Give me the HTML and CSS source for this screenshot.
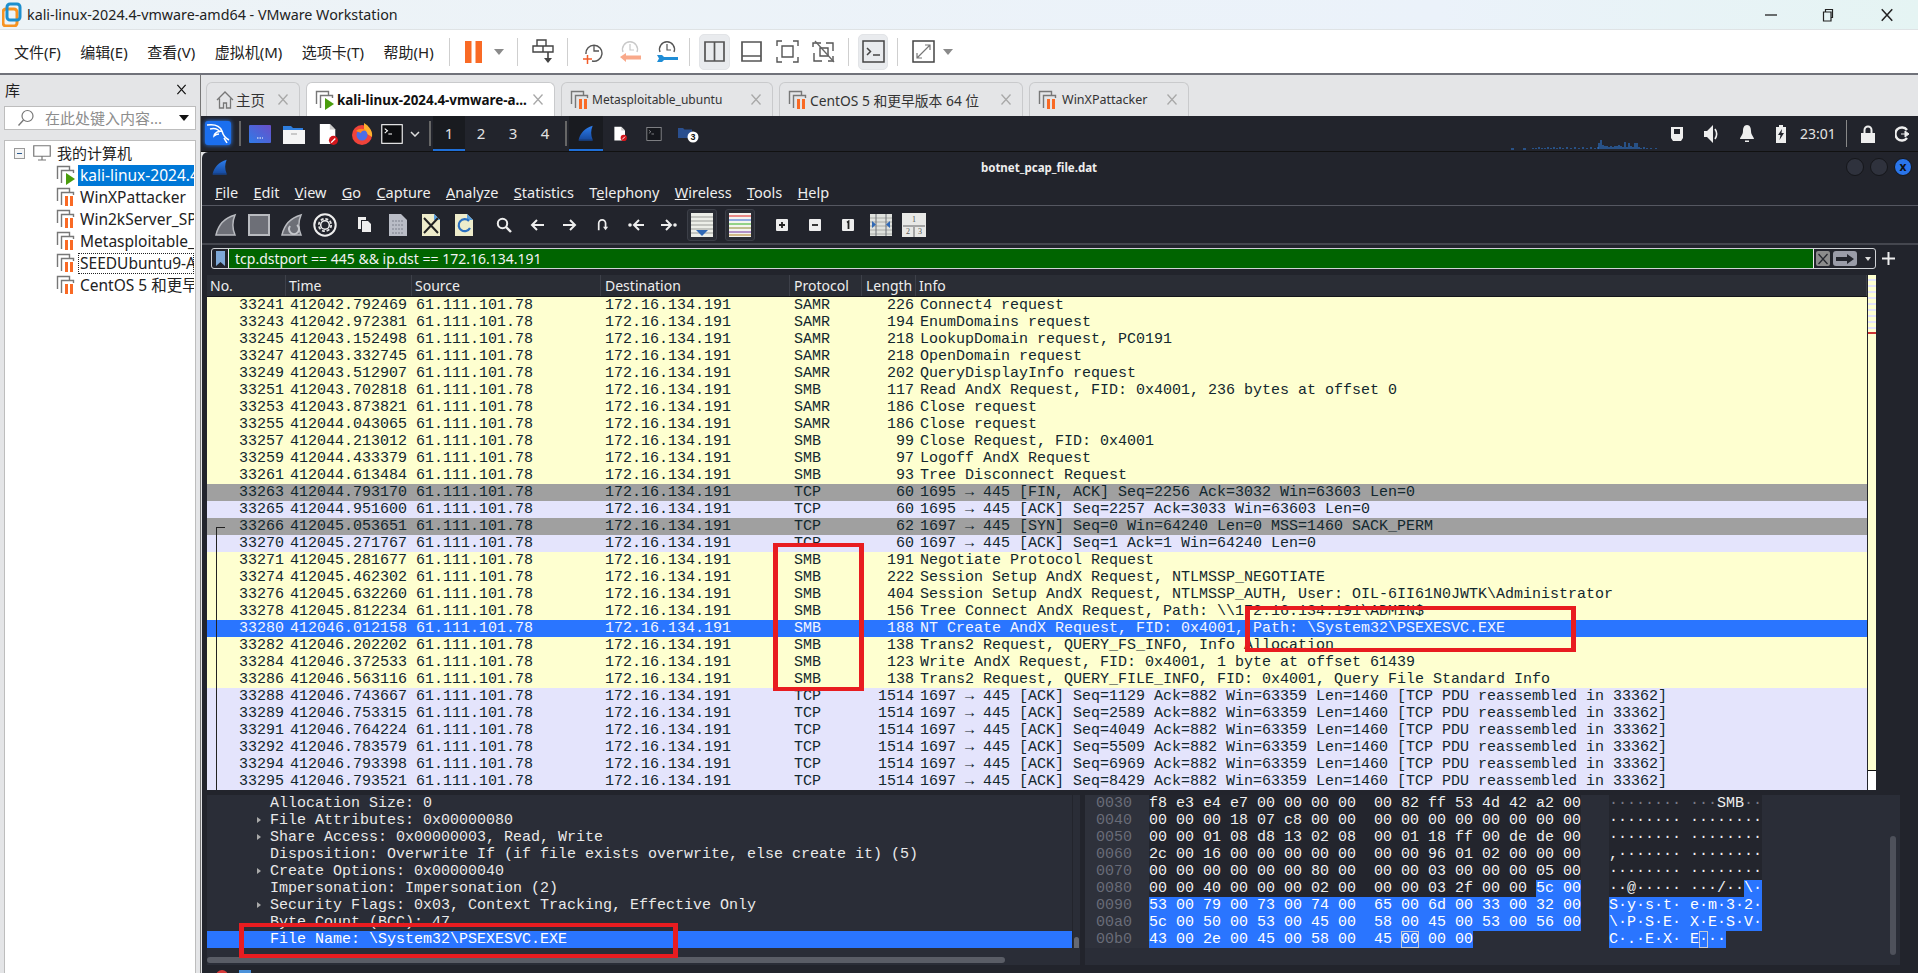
FILE: index.html
```html
<!DOCTYPE html>
<html lang="zh">
<head>
<meta charset="utf-8">
<title>kali-linux-2024.4-vmware-amd64 - VMware Workstation</title>
<link rel="stylesheet" href="styles.css">
</head>
<body>
<svg class="sprite" aria-hidden="true">
  <defs>
    <linearGradient id="finblue" x1="0" y1="0" x2="0" y2="1"><stop offset="0" stop-color="#2d7ff0"/><stop offset="1" stop-color="#164a9e"/></linearGradient>
    <linearGradient id="purple" x1="1" y1="0" x2="0" y2="1"><stop offset="0" stop-color="#6a4fc8"/><stop offset="1" stop-color="#2f7be8"/></linearGradient>
  </defs>
  <symbol id="vm-off" viewBox="0 0 20 20"><path d="M1.5 14V1.5h12V5M5.5 18V5.5h12V8" fill="none" stroke="#777" stroke-width="1.4"/><path d="M9 9h3v10H9zM14 9h3v10h-3z" fill="#f96a25"/></symbol>
  <symbol id="vm-on" viewBox="0 0 20 20"><path d="M1.5 14V1.5h12V5M5.5 18V5.5h12V8" fill="none" stroke="#777" stroke-width="1.4"/><path d="M10 8l9 6-9 6z" fill="#4a9d0c"/></symbol>
  <symbol id="x" viewBox="0 0 12 12"><path d="M1.5 1l9 10M10.5 1l-9 10" fill="none" stroke="currentColor" stroke-width="1.3"/></symbol>
  <symbol id="fin" viewBox="0 0 24 24"><path d="M1 22C3 13 10 4 22 1c-3 7-3 14 0 21z" fill="url(#finblue)"/><path d="M1 22h21v1.500H1z" fill="#164a9e"/></symbol>
  <symbol id="fin-gray" viewBox="0 0 24 24"><path d="M2 22C4 13 10 5 21 2c-3 7-3 13 0 20z" fill="#6d6f77" stroke="#b9bbc0" stroke-width="1.5"/></symbol>
  <symbol id="doc" viewBox="0 0 22 24"><path d="M2 1h11l6 6v16H2z" fill="#fff"/><path d="M13 1l6 6h-6z" fill="#ccc"/><circle cx="17" cy="19" r="5" fill="#d3161c"/><path d="M14.500 21.500l4.500-4.500" stroke="#fff" stroke-width="1.500"/></symbol>
  <symbol id="term" viewBox="0 0 24 22"><rect x=".75" y=".75" width="22.500" height="20.500" fill="#0c0d10" stroke="#fff" stroke-width="1.200"/><path d="M4 5l3 2.500L4 10M8 11h4" fill="none" stroke="#fff" stroke-width="1.200"/></symbol>
</svg>

<header class="titlebar">
  <svg class="app-logo" width="20" height="25" viewBox="0 0 20 25"><rect x="1" y="7" width="14" height="17" rx="3" fill="none" stroke="#f79321" stroke-width="3"/><rect x="5" y="2" width="13" height="16" rx="3" fill="none" stroke="#1d8fce" stroke-width="3"/></svg>
  <span class="title-text">kali-linux-2024.4-vmware-amd64 - VMware Workstation</span>
  <div class="win-btns">
    <svg width="12" height="12" viewBox="0 0 12 12"><path d="M0 6h12" stroke="#222" stroke-width="1.300"/></svg>
    <svg width="12" height="14" viewBox="0 0 12 14"><path d="M1.500 4h7.500v9H1.500zM3.500 4V1.500h7v8H9" fill="none" stroke="#222" stroke-width="1.200"/></svg>
    <svg class="win-x" width="14" height="14"><use href="#x"/></svg>
  </div>
</header>

<nav class="menubar">
  <div class="menus"><span>文件(F)</span><span>编辑(E)</span><span>查看(V)</span><span>虚拟机(M)</span><span>选项卡(T)</span><span>帮助(H)</span></div>
  <i class="sep ml13"></i>
  <div class="vbtn w36 ml6"><svg width="18" height="22" viewBox="0 0 18 22"><path d="M0 0h6.500v22H0zM10.500 0H17v22h-6.500z" fill="#f96a25"/></svg></div>
  <div class="drop"></div>
  <i class="sep ml11"></i>
  <div class="vbtn w36 ml7"><svg width="22" height="26" viewBox="0 0 22 26"><path d="M5 1h9v6H5zM1 7h10v6H1zM11 7h10v6H11z" fill="none" stroke="#444" stroke-width="1.400"/><path d="M16 13v7" stroke="#444" stroke-width="1.600"/><path d="M12 19h8l-4 5z" fill="#444"/></svg></div>
  <i class="sep ml6"></i>
  <div class="vbtn w37 ml6"><svg width="20" height="24" viewBox="0 0 20 24"><path d="M3 14a8 8 0 1 1 6 7" fill="none" stroke="#555" stroke-width="1.400"/><path d="M11 5v6h5" fill="none" stroke="#555" stroke-width="1.300"/><path d="M0 19h9M4.500 15v9" stroke="#f25c2a" stroke-width="1.500"/></svg></div>
  <div class="vbtn w37"><svg width="22" height="24" viewBox="0 0 22 24"><path d="M4 12a7.500 7.500 0 1 1 14 0" fill="none" stroke="#c9c9c9" stroke-width="1.400"/><path d="M11 4v6h4" fill="none" stroke="#c9c9c9" stroke-width="1.200"/><path d="M1 17l6-4v2.500h15v4H7V22z" fill="#f9a98a"/></svg></div>
  <div class="vbtn w37"><svg width="22" height="24" viewBox="0 0 22 24"><path d="M4 12a7.500 7.500 0 1 1 14 0" fill="none" stroke="#555" stroke-width="1.400"/><path d="M11 4v6h4" fill="none" stroke="#555" stroke-width="1.200"/><path d="M1 15h5l2 2h14v3H8l-2 2H1l2-3.500z" fill="#1f8dd6"/></svg></div>
  <i class="sep ml4"></i>
  <div class="vbtn w31 ml9 active"><svg width="21" height="21" viewBox="0 0 21 21"><path d="M1 1h19v19H1zM10.500 1v19" fill="none" stroke="#555" stroke-width="1.700"/></svg></div>
  <div class="vbtn w36 ml3"><svg width="21" height="21" viewBox="0 0 21 21"><path d="M1 1h19v19H1zM1 15h19" fill="none" stroke="#555" stroke-width="1.700"/></svg></div>
  <div class="vbtn w36"><svg width="23" height="23" viewBox="0 0 23 23"><path d="M1 6V1h5M17 1h5v5M22 17v5h-5M6 22H1v-5" fill="none" stroke="#555" stroke-width="1.400"/><path d="M6 6h11v11H6z" fill="none" stroke="#555" stroke-width="1.400"/></svg></div>
  <div class="vbtn w36"><svg width="23" height="23" viewBox="0 0 23 23"><path d="M1 7V3h8M14 3h7v8M21 16v5h-5M10 21H2v-8M8 8h8v8H8z" fill="none" stroke="#555" stroke-width="1.400"/><path d="M3 1l19 21" stroke="#666" stroke-width="1.300"/></svg></div>
  <i class="sep ml7"></i>
  <div class="vbtn w30 ml9 active"><svg width="23" height="23" viewBox="0 0 23 23"><path d="M1 1h21v21H1z" fill="none" stroke="#444" stroke-width="1.500"/><path d="M5 8l3.500 3.500L5 15" fill="none" stroke="#444" stroke-width="1.500"/><path d="M11 15h7" stroke="#444" stroke-width="1.500"/></svg></div>
  <i class="sep ml9"></i>
  <div class="vbtn w36 ml7"><svg width="23" height="23" viewBox="0 0 23 23"><path d="M1 1h21v21H1z" fill="none" stroke="#444" stroke-width="1.500"/><path d="M5 18L18 5M13 5h5v5M5 13v5h5" fill="none" stroke="#777" stroke-width="1.200"/></svg></div>
  <div class="drop"></div>
</nav>

<main class="main">
  <aside class="library">
    <div class="lib-head"><span>库</span><svg class="lib-x" width="11" height="11"><use href="#x"/></svg></div>
    <div class="lib-search">
      <svg width="18" height="18" viewBox="0 0 18 18"><circle cx="10.500" cy="7" r="5.500" fill="none" stroke="#777" stroke-width="1.200"/><path d="M6.500 11L1.500 16.500" stroke="#777" stroke-width="1.400"/></svg>
      <span class="ph">在此处键入内容...</span>
      <i class="lib-drop"></i>
    </div>
    <div class="tree">
      <div class="tree-root">
        <i class="minus"></i>
        <svg width="18" height="16" viewBox="0 0 18 16"><path d="M.75.750h16.500v10.500H.75zM9 11.500V15M5 15h8" fill="none" stroke="#777" stroke-width="1.200"/></svg>
        <span>我的计算机</span>
      </div>
      <div class="tree-row"><svg width="20" height="20"><use href="#vm-on"/></svg><span class="tree-label selected">kali-linux-2024.4</span></div>
      <div class="tree-row"><svg width="20" height="20"><use href="#vm-off"/></svg><span class="tree-label">WinXPattacker</span></div>
      <div class="tree-row"><svg width="20" height="20"><use href="#vm-off"/></svg><span class="tree-label">Win2kServer_SP</span></div>
      <div class="tree-row"><svg width="20" height="20"><use href="#vm-off"/></svg><span class="tree-label">Metasploitable_</span></div>
      <div class="tree-row"><svg width="20" height="20"><use href="#vm-off"/></svg><span class="tree-label focused">SEEDUbuntu9-A</span></div>
      <div class="tree-row"><svg width="20" height="20"><use href="#vm-off"/></svg><span class="tree-label">CentOS 5 和更早</span></div>
    </div>
  </aside>

  <section class="vm">
    <div class="tabs">
      <div class="tab t-home"><svg width="20" height="20" viewBox="0 0 20 20"><path d="M2 10l8-8 8 8M4.500 8.500V18h4v-5h3v5h4V8.500" fill="none" stroke="#777" stroke-width="1.300"/></svg><span>主页</span><svg class="tab-x" width="12" height="13"><use href="#x"/></svg></div>
      <div class="tab t-kali active"><svg width="20" height="20"><use href="#vm-on"/></svg><span>kali-linux-2024.4-vmware-a...</span><svg class="tab-x" width="12" height="13"><use href="#x"/></svg></div>
      <div class="tab t-meta"><svg width="20" height="20"><use href="#vm-off"/></svg><span>Metasploitable_ubuntu</span><svg class="tab-x" width="12" height="13"><use href="#x"/></svg></div>
      <div class="tab t-cent"><svg width="20" height="20"><use href="#vm-off"/></svg><span>CentOS 5 和更早版本 64 位</span><svg class="tab-x" width="12" height="13"><use href="#x"/></svg></div>
      <div class="tab t-winx"><svg width="20" height="20"><use href="#vm-off"/></svg><span>WinXPattacker</span><svg class="tab-x" width="12" height="13"><use href="#x"/></svg></div>
    </div>

    <div class="panel">
      <div class="kali-logo"><svg width="26" height="24" viewBox="0 0 26 24"><path d="M2 4c7-1 13 1 15 6 1 4 3 7 7 9M5 8c4-1 8 0 10 3M17 10c-4 0-8 2-8 5 1-1 3-2 5-2M19 17c1 2 2 3 3 5" fill="none" stroke="#fff" stroke-width="1.500"/></svg></div>
      <i class="psep ml8"></i>
      <div class="cell c34 ml2"><svg width="22" height="18"><rect width="22" height="18" rx="1" fill="url(#purple)"/><path d="M8 13h6" stroke="#fff" stroke-dasharray="1.500 1"/></svg></div>
      <div class="cell c34"><svg width="22" height="20" viewBox="0 0 22 20"><path d="M0 2h8l2 2h10v3H0z" fill="#2f7fe0"/><path d="M0 6h22v14H0z" fill="#f4f4f4"/><path d="M8 10h6" stroke="#bbb" stroke-width="1.500"/></svg></div>
      <div class="cell c34"><svg width="20" height="22"><use href="#doc"/></svg></div>
      <div class="cell c34"><svg width="22" height="22" viewBox="0 0 22 22"><circle cx="11" cy="12" r="10" fill="#f0433a"/><path d="M13 0c5 3 9 8 8 14L13 9z" fill="#ffb02e"/><circle cx="11" cy="12" r="5.500" fill="#4a6ee8"/><path d="M5 8c3-3 8-3 11 0-3-1-6 0-6 2z" fill="#ff8a1e"/></svg></div>
      <div class="cell c26"><svg width="22" height="20"><use href="#term"/></svg></div>
      <div class="cell c20"><svg width="10" height="6" viewBox="0 0 10 6"><path d="M1 1l4 4 4-4" fill="none" stroke="#ddd" stroke-width="1.500"/></svg></div>
      <i class="psep ml4"></i>
      <div class="ws ml2 on">1</div><div class="ws">2</div><div class="ws">3</div><div class="ws">4</div>
      <i class="psep ml4"></i>
      <div class="cell c34 ml2 on"><svg width="16" height="16"><use href="#fin"/></svg></div>
      <div class="cell c34"><svg width="14" height="15"><use href="#doc"/></svg></div>
      <div class="cell c34"><svg class="dim" width="16" height="14"><use href="#term"/></svg></div>
      <div class="cell c34"><svg width="22" height="20" viewBox="0 0 22 20"><path d="M1 4h5l1.500 1.500H15V14H1z" fill="#2a4f8f"/><circle cx="16" cy="13" r="5.500" fill="#fff"/><text x="16" y="16" text-anchor="middle" font-family="Liberation Sans, sans-serif" font-size="9" font-weight="700" fill="#111">3</text></svg></div>
      <svg class="graph" width="148" height="12" viewBox="0 0 148 12"><path d="M0 11h3M12 11h3M22 11v-1M25 11v-1M28 11v-2M31 11v-1M34 11v-1M37 11v-2M40 11v-1M43 11v-2M46 11v-1M49 11v-2M52 11v-1M56 11v-2M60 11v-1M64 11v-2M68 11v-1M72 11v-2M76 11v-1M80 11v-2M84 11v-1M87 11v-2M88 11v-6M90 11v-9M92 11v-4M94 11v-3M96 11v-3M98 11v-2M100 11v-3M102 11v-2M104 11v-3M106 11v-3M108 11v-4M110 11v-3M112 11v-2M114 11v-7M116 11v-2M118 11v-6M120 11v-3M122 11v-2M124 11v-6M126 11v-6M128 11v-2M130 11v-1M133 11v-2M136 11v-1M140 11v-1M145 11v-1" stroke="#2f7fe0" fill="none"/></svg>
      <div class="cell c35"><svg width="14" height="16" viewBox="0 0 14 16"><path d="M1 1h12v11l-2 3H3l-2-3z" fill="#eee"/><path d="M4 3h6v5H4z" fill="#22242c"/></svg></div>
      <div class="cell c35"><svg width="16" height="18" viewBox="0 0 16 18"><path d="M0 6h3l6-6v18l-6-6H0z" fill="#eee"/><path d="M11 4c2 3 2 7 0 10" fill="none" stroke="#eee" stroke-width="1.600"/></svg></div>
      <div class="cell c35"><svg width="14" height="18" viewBox="0 0 14 18"><path d="M7 0c3 0 4 3 4 6 0 4 3 6 3 8H0c0-2 3-4 3-8 0-3 1-6 4-6z" fill="#eee"/><path d="M5 15.500h4V17H5z" fill="#eee"/></svg></div>
      <div class="cell c34"><svg width="10" height="18" viewBox="0 0 10 18"><path d="M3 0h4v2h3v16H0V2h3z" fill="#eee"/><path d="M6 4L2 10h2.500L3.500 15 8 8H5.500z" fill="#22242c"/></svg></div>
      <div class="clock">23:01</div>
      <i class="psep ml8 thin"></i>
      <div class="cell c32 ml5"><svg width="14" height="18" viewBox="0 0 14 18"><path d="M3.500 8V5a3.500 3.500 0 0 1 7 0v3" fill="none" stroke="#eee" stroke-width="2"/><path d="M0 8h14v10H0z" fill="#eee"/></svg></div>
      <div class="cell c32 ml2"><svg width="15" height="16" viewBox="0 0 15 16"><path d="M12 4a6.500 6.500 0 1 0 0 8" fill="none" stroke="#eee" stroke-width="2.400"/><path d="M6 8h6M10 5l4 3-4 3z" fill="#eee" stroke="#eee"/></svg></div>
    </div>

    <div class="window">
      <div class="ws-title">
        <svg class="ws-logo" width="16" height="16"><use href="#fin"/></svg>
        <span class="ws-name">botnet_pcap_file.dat</span>
        <div class="ws-btns"><i></i><i></i><i class="close">x</i></div>
      </div>
      <div class="ws-menu"><span><u>F</u>ile</span><span><u>E</u>dit</span><span><u>V</u>iew</span><span><u>G</u>o</span><span><u>C</u>apture</span><span><u>A</u>nalyze</span><span><u>S</u>tatistics</span><span>T<u>e</u>lephony</span><span><u>W</u>ireless</span><span><u>T</u>ools</span><span><u>H</u>elp</span></div>
      <div class="ws-tools">
        <div class="tool"><svg width="24" height="24"><use href="#fin-gray"/></svg></div>
        <div class="tool"><svg width="22" height="22" viewBox="0 0 22 22"><rect x="1" y="1" width="20" height="20" fill="#6d6f77" stroke="#b9bbc0" stroke-width="2"/></svg></div>
        <div class="tool"><svg width="24" height="24" viewBox="0 0 24 24"><path d="M2 22C4 13 10 5 21 2c-3 7-3 13 0 20z" fill="#6d6f77" stroke="#b9bbc0" stroke-width="1.500"/><path d="M10 13a5 5 0 1 0 7-1" fill="none" stroke="#c5c7cc" stroke-width="2"/></svg></div>
        <div class="tool"><svg width="24" height="24" viewBox="0 0 24 24"><circle cx="12" cy="12" r="10.700" fill="none" stroke="#eee" stroke-width="2"/><circle cx="12" cy="12" r="6.200" fill="none" stroke="#e4e4e4" stroke-width="1.800" stroke-dasharray="3 1.800"/><circle cx="12" cy="12" r="4.300" fill="none" stroke="#eee" stroke-width="1.500"/></svg></div>
        <div class="tool ml7"><svg width="15" height="15" viewBox="0 0 15 15"><path d="M1 0h8v3H4v9H1z" fill="#eee"/><path d="M5 4h6l3 3v8H5z" fill="#eee"/></svg></div>
        <div class="tool"><svg width="20" height="24" viewBox="0 0 20 24"><path d="M1 1h12l6 6v16H1z" fill="#b9bcc6"/><path d="M4 8h12M4 12h12M4 16h12M4 20h12" stroke="#7d808c" stroke-dasharray="2 1"/></svg></div>
        <div class="tool"><svg width="20" height="24" viewBox="0 0 20 24"><path d="M1 1h12l6 6v16H1z" fill="#eeeccb"/><path d="M13 1l6 6h-6z" fill="#5aa0e0"/><path d="M3 5l14 15M17 5L3 20" stroke="#222" stroke-width="2"/></svg></div>
        <div class="tool"><svg width="20" height="24" viewBox="0 0 20 24"><path d="M1 1h12l6 6v16H1z" fill="#eeeccb"/><path d="M13 1l6 6h-6z" fill="#5aa0e0"/><path d="M15 8a6 6 0 1 0 1 7" fill="none" stroke="#2a6fc0" stroke-width="2.200"/></svg></div>
        <div class="tool ml7"><svg width="16" height="16" viewBox="0 0 16 16"><circle cx="6.500" cy="6.500" r="4.700" fill="none" stroke="#eee" stroke-width="2"/><path d="M10 10l5 5" stroke="#eee" stroke-width="2.400"/></svg></div>
        <div class="tool"><svg width="14" height="12" viewBox="0 0 14 12"><path d="M14 6H2M7 1L2 6l5 5" fill="none" stroke="#eee" stroke-width="2"/></svg></div>
        <div class="tool"><svg width="14" height="12" viewBox="0 0 14 12"><path d="M0 6h12M7 1l5 5-5 5" fill="none" stroke="#eee" stroke-width="2"/></svg></div>
        <div class="tool"><svg width="12" height="14" viewBox="0 0 14 14"><path d="M2 13V5a4 4 0 0 1 8 0v5" fill="none" stroke="#eee" stroke-width="2"/><path d="M7 9l3 4 3-4z" fill="#eee"/></svg></div>
        <div class="tool"><svg width="16" height="12" viewBox="0 0 16 12"><circle cx="2" cy="6" r="1.800" fill="#eee"/><path d="M16 6H6M11 1L6 6l5 5" fill="none" stroke="#eee" stroke-width="2"/></svg></div>
        <div class="tool"><svg width="16" height="12" viewBox="0 0 16 12"><circle cx="14" cy="6" r="1.800" fill="#eee"/><path d="M0 6h10M5 1l5 5-5 5" fill="none" stroke="#eee" stroke-width="2"/></svg></div>
        <div class="tool frame ml2"><svg width="22" height="26" viewBox="0 0 22 26"><path d="M0 1h22v24H0z" fill="#eceee8"/><path d="M0 5h22M0 9h22M0 13h22M0 17h22M0 21h22" stroke="#9a9c98"/><path d="M5 18h12l-6 6z" fill="#2f68b5"/></svg></div>
        <div class="tool frame ml5"><svg width="22" height="26" viewBox="0 0 22 26"><path d="M0 1h22v24H0z" fill="#f4f4f0"/><path d="M0 4h22" stroke="#e02020"/><path d="M0 8h22" stroke="#2a60d0"/><path d="M0 12h22" stroke="#30b020"/><path d="M0 16h22" stroke="#8a8a30"/><path d="M0 20h22" stroke="#7030a0"/><path d="M0 23h22" stroke="#b08020"/></svg></div>
        <div class="tool ml7"><svg width="12" height="12" viewBox="0 0 12 12"><rect width="12" height="12" rx="1" fill="#eee"/><path d="M3 6h6M6 3v6" stroke="#222" stroke-width="1.800"/></svg></div>
        <div class="tool"><svg width="12" height="12" viewBox="0 0 12 12"><rect width="12" height="12" rx="1" fill="#eee"/><path d="M3 6h6" stroke="#222" stroke-width="1.800"/></svg></div>
        <div class="tool"><svg width="12" height="12" viewBox="0 0 12 12"><rect width="12" height="12" rx="1" fill="#eee"/><path d="M5 3.500l1.500-1V10" fill="none" stroke="#222" stroke-width="1.800"/></svg></div>
        <div class="tool"><svg width="22" height="22" viewBox="0 0 22 22"><path d="M0 0h22v22H0z" fill="#dfe1dd"/><path d="M0 4h22M0 8h22M0 12h22M0 16h22M0 20h22" stroke="#a8aaa6"/><path d="M6 0v22M16 0v22" stroke="#6d7078"/><path d="M2 7l4 3.500L2 14zM20 7l-4 3.500 4 3.500z" fill="#2f68b5"/></svg></div>
        <div class="tool"><svg width="24" height="24" viewBox="0 0 24 24"><path d="M0 0h24v24H0z" fill="#e8e8e6"/><path d="M1 13h22M12 13v11" stroke="#a5a5a5" stroke-width="2"/><g font-family="Liberation Serif, serif" font-size="8" fill="#555" text-anchor="middle"><text x="12" y="9">1</text><text x="6" y="21">2</text><text x="18" y="21">3</text></g></svg></div>
      </div>
      <div class="filter-row">
        <div class="filter">
          <div class="bookmark"><svg width="9" height="15" viewBox="0 0 9 15"><path d="M0 0h9v15l-4.500-4L0 15z" fill="#7fa9d8"/></svg></div>
          <div class="filter-text">tcp.dstport == 445 &amp;&amp; ip.dst == 172.16.134.191</div>
          <div class="f-clear"><svg width="12" height="12"><use href="#x"/></svg></div>
          <div class="f-apply"><svg width="18" height="10" viewBox="0 0 18 10"><path d="M0 3h11V0l7 5-7 5V7H0z" fill="#22242c"/></svg></div>
          <i class="f-drop"></i>
        </div>
        <svg class="f-plus" width="13" height="13" viewBox="0 0 13 13"><path d="M6.500 0v13M0 6.500h13" stroke="#eee" stroke-width="2"/></svg>
      </div>

      <div class="list-wrap">
        <div class="list">
          <div class="pkt-head"><span class="no">No.</span><span class="time">Time</span><span class="src">Source</span><span class="dst">Destination</span><span class="pro">Protocol</span><span class="len">Length</span><span class="info">Info</span></div>
          <div class="pkts">
            <i class="bracket"></i>
            <div class="pkt y"><span class="no">33241</span><span class="time">412042.792469</span><span class="src">61.111.101.78</span><span class="dst">172.16.134.191</span><span class="pro">SAMR</span><span class="len">226</span><span class="info">Connect4 request</span></div>
            <div class="pkt y"><span class="no">33243</span><span class="time">412042.972381</span><span class="src">61.111.101.78</span><span class="dst">172.16.134.191</span><span class="pro">SAMR</span><span class="len">194</span><span class="info">EnumDomains request</span></div>
            <div class="pkt y"><span class="no">33245</span><span class="time">412043.152498</span><span class="src">61.111.101.78</span><span class="dst">172.16.134.191</span><span class="pro">SAMR</span><span class="len">218</span><span class="info">LookupDomain request, PC0191</span></div>
            <div class="pkt y"><span class="no">33247</span><span class="time">412043.332745</span><span class="src">61.111.101.78</span><span class="dst">172.16.134.191</span><span class="pro">SAMR</span><span class="len">218</span><span class="info">OpenDomain request</span></div>
            <div class="pkt y"><span class="no">33249</span><span class="time">412043.512907</span><span class="src">61.111.101.78</span><span class="dst">172.16.134.191</span><span class="pro">SAMR</span><span class="len">202</span><span class="info">QueryDisplayInfo request</span></div>
            <div class="pkt y"><span class="no">33251</span><span class="time">412043.702818</span><span class="src">61.111.101.78</span><span class="dst">172.16.134.191</span><span class="pro">SMB</span><span class="len">117</span><span class="info">Read AndX Request, FID: 0x4001, 236 bytes at offset 0</span></div>
            <div class="pkt y"><span class="no">33253</span><span class="time">412043.873821</span><span class="src">61.111.101.78</span><span class="dst">172.16.134.191</span><span class="pro">SAMR</span><span class="len">186</span><span class="info">Close request</span></div>
            <div class="pkt y"><span class="no">33255</span><span class="time">412044.043065</span><span class="src">61.111.101.78</span><span class="dst">172.16.134.191</span><span class="pro">SAMR</span><span class="len">186</span><span class="info">Close request</span></div>
            <div class="pkt y"><span class="no">33257</span><span class="time">412044.213012</span><span class="src">61.111.101.78</span><span class="dst">172.16.134.191</span><span class="pro">SMB</span><span class="len">99</span><span class="info">Close Request, FID: 0x4001</span></div>
            <div class="pkt y"><span class="no">33259</span><span class="time">412044.433379</span><span class="src">61.111.101.78</span><span class="dst">172.16.134.191</span><span class="pro">SMB</span><span class="len">97</span><span class="info">Logoff AndX Request</span></div>
            <div class="pkt y"><span class="no">33261</span><span class="time">412044.613484</span><span class="src">61.111.101.78</span><span class="dst">172.16.134.191</span><span class="pro">SMB</span><span class="len">93</span><span class="info">Tree Disconnect Request</span></div>
            <div class="pkt g"><span class="no">33263</span><span class="time">412044.793170</span><span class="src">61.111.101.78</span><span class="dst">172.16.134.191</span><span class="pro">TCP</span><span class="len">60</span><span class="info">1695 → 445 [FIN, ACK] Seq=2256 Ack=3032 Win=63603 Len=0</span></div>
            <div class="pkt l"><span class="no">33265</span><span class="time">412044.951600</span><span class="src">61.111.101.78</span><span class="dst">172.16.134.191</span><span class="pro">TCP</span><span class="len">60</span><span class="info">1695 → 445 [ACK] Seq=2257 Ack=3033 Win=63603 Len=0</span></div>
            <div class="pkt g"><span class="no">33266</span><span class="time">412045.053651</span><span class="src">61.111.101.78</span><span class="dst">172.16.134.191</span><span class="pro">TCP</span><span class="len">62</span><span class="info">1697 → 445 [SYN] Seq=0 Win=64240 Len=0 MSS=1460 SACK_PERM</span></div>
            <div class="pkt l"><span class="no">33270</span><span class="time">412045.271767</span><span class="src">61.111.101.78</span><span class="dst">172.16.134.191</span><span class="pro">TCP</span><span class="len">60</span><span class="info">1697 → 445 [ACK] Seq=1 Ack=1 Win=64240 Len=0</span></div>
            <div class="pkt y"><span class="no">33271</span><span class="time">412045.281677</span><span class="src">61.111.101.78</span><span class="dst">172.16.134.191</span><span class="pro">SMB</span><span class="len">191</span><span class="info">Negotiate Protocol Request</span></div>
            <div class="pkt y"><span class="no">33274</span><span class="time">412045.462302</span><span class="src">61.111.101.78</span><span class="dst">172.16.134.191</span><span class="pro">SMB</span><span class="len">222</span><span class="info">Session Setup AndX Request, NTLMSSP_NEGOTIATE</span></div>
            <div class="pkt y"><span class="no">33276</span><span class="time">412045.632260</span><span class="src">61.111.101.78</span><span class="dst">172.16.134.191</span><span class="pro">SMB</span><span class="len">404</span><span class="info">Session Setup AndX Request, NTLMSSP_AUTH, User: OIL-6II61N0JWTK\Administrator</span></div>
            <div class="pkt y"><span class="no">33278</span><span class="time">412045.812234</span><span class="src">61.111.101.78</span><span class="dst">172.16.134.191</span><span class="pro">SMB</span><span class="len">156</span><span class="info">Tree Connect AndX Request, Path: \\172.16.134.191\ADMIN$</span></div>
            <div class="pkt s"><span class="no">33280</span><span class="time">412046.012158</span><span class="src">61.111.101.78</span><span class="dst">172.16.134.191</span><span class="pro">SMB</span><span class="len">188</span><span class="info">NT Create AndX Request, FID: 0x4001, Path: \System32\PSEXESVC.EXE</span></div>
            <div class="pkt y"><span class="no">33282</span><span class="time">412046.202202</span><span class="src">61.111.101.78</span><span class="dst">172.16.134.191</span><span class="pro">SMB</span><span class="len">138</span><span class="info">Trans2 Request, QUERY_FS_INFO, Info Allocation</span></div>
            <div class="pkt y"><span class="no">33284</span><span class="time">412046.372533</span><span class="src">61.111.101.78</span><span class="dst">172.16.134.191</span><span class="pro">SMB</span><span class="len">123</span><span class="info">Write AndX Request, FID: 0x4001, 1 byte at offset 61439</span></div>
            <div class="pkt y"><span class="no">33286</span><span class="time">412046.563116</span><span class="src">61.111.101.78</span><span class="dst">172.16.134.191</span><span class="pro">SMB</span><span class="len">138</span><span class="info">Trans2 Request, QUERY_FILE_INFO, FID: 0x4001, Query File Standard Info</span></div>
            <div class="pkt l"><span class="no">33288</span><span class="time">412046.743667</span><span class="src">61.111.101.78</span><span class="dst">172.16.134.191</span><span class="pro">TCP</span><span class="len">1514</span><span class="info">1697 → 445 [ACK] Seq=1129 Ack=882 Win=63359 Len=1460 [TCP PDU reassembled in 33362]</span></div>
            <div class="pkt l"><span class="no">33289</span><span class="time">412046.753315</span><span class="src">61.111.101.78</span><span class="dst">172.16.134.191</span><span class="pro">TCP</span><span class="len">1514</span><span class="info">1697 → 445 [ACK] Seq=2589 Ack=882 Win=63359 Len=1460 [TCP PDU reassembled in 33362]</span></div>
            <div class="pkt l"><span class="no">33291</span><span class="time">412046.764224</span><span class="src">61.111.101.78</span><span class="dst">172.16.134.191</span><span class="pro">TCP</span><span class="len">1514</span><span class="info">1697 → 445 [ACK] Seq=4049 Ack=882 Win=63359 Len=1460 [TCP PDU reassembled in 33362]</span></div>
            <div class="pkt l"><span class="no">33292</span><span class="time">412046.783579</span><span class="src">61.111.101.78</span><span class="dst">172.16.134.191</span><span class="pro">TCP</span><span class="len">1514</span><span class="info">1697 → 445 [ACK] Seq=5509 Ack=882 Win=63359 Len=1460 [TCP PDU reassembled in 33362]</span></div>
            <div class="pkt l"><span class="no">33294</span><span class="time">412046.793398</span><span class="src">61.111.101.78</span><span class="dst">172.16.134.191</span><span class="pro">TCP</span><span class="len">1514</span><span class="info">1697 → 445 [ACK] Seq=6969 Ack=882 Win=63359 Len=1460 [TCP PDU reassembled in 33362]</span></div>
            <div class="pkt l"><span class="no">33295</span><span class="time">412046.793521</span><span class="src">61.111.101.78</span><span class="dst">172.16.134.191</span><span class="pro">TCP</span><span class="len">1514</span><span class="info">1697 → 445 [ACK] Seq=8429 Ack=882 Win=63359 Len=1460 [TCP PDU reassembled in 33362]</span></div>
          </div>
        </div>
        <div class="minimap"></div>
      </div>

      <div class="panes">
        <div class="details">
          <div class="d-body">
            <div class="d-rows">
              <div class="drow"><i class="tw"></i>Allocation Size: 0</div>
              <div class="drow"><i class="tw on"></i>File Attributes: 0x00000080</div>
              <div class="drow"><i class="tw on"></i>Share Access: 0x00000003, Read, Write</div>
              <div class="drow"><i class="tw"></i>Disposition: Overwrite If (if file exists overwrite, else create it) (5)</div>
              <div class="drow"><i class="tw on"></i>Create Options: 0x00000040</div>
              <div class="drow"><i class="tw"></i>Impersonation: Impersonation (2)</div>
              <div class="drow"><i class="tw on"></i>Security Flags: 0x03, Context Tracking, Effective Only</div>
              <div class="drow"><i class="tw"></i>Byte Count (BCC): 47</div>
              <div class="drow sel"><i class="tw"></i>File Name: \System32\PSEXESVC.EXE</div>
            </div>
            <div class="vbar"><b></b></div>
          </div>
          <div class="hbar"><b></b></div>
        </div>
        <div class="hex">
          <div class="hex-rows">
            <div class="hrow"><span class="off">0030</span><span class="bytes">f8 e3 e4 e7 00 00 00 00  00 82 ff 53 4d 42 a2 00</span><span class="asc"><span class="dim-t">········ ···</span>SMB<span class="dim-t">··</span></span></div>
            <div class="hrow"><span class="off">0040</span><span class="bytes">00 00 00 18 07 c8 00 00  00 00 00 00 00 00 00 00</span><span class="asc">········ ········</span></div>
            <div class="hrow"><span class="off">0050</span><span class="bytes">00 00 01 08 d8 13 02 08  00 01 18 ff 00 de de 00</span><span class="asc">········ ········</span></div>
            <div class="hrow"><span class="off">0060</span><span class="bytes">2c 00 16 00 00 00 00 00  00 00 96 01 02 00 00 00</span><span class="asc">,······· ········</span></div>
            <div class="hrow"><span class="off">0070</span><span class="bytes">00 00 00 00 00 00 80 00  00 00 03 00 00 00 05 00</span><span class="asc">········ ········</span></div>
            <div class="hrow"><span class="off">0080</span><span class="bytes">00 00 40 00 00 00 02 00  00 00 03 2f 00 00 <mark>5c 00</mark></span><span class="asc">··@····· ···/··<mark>\·</mark></span></div>
            <div class="hrow"><span class="off">0090</span><span class="bytes"><mark>53 00 79 00 73 00 74 00  65 00 6d 00 33 00 32 00</mark></span><span class="asc"><mark>S·y·s·t· e·m·3·2·</mark></span></div>
            <div class="hrow"><span class="off">00a0</span><span class="bytes"><mark>5c 00 50 00 53 00 45 00  58 00 45 00 53 00 56 00</mark></span><span class="asc"><mark>\·P·S·E· X·E·S·V·</mark></span></div>
            <div class="hrow"><span class="off">00b0</span><span class="bytes b-end"><mark>43 00 2e 00 45 00 58 00  45 <em>00</em> 00 00</mark></span><span class="asc a-end"><mark>C·.·E·X· E<em>·</em>··</mark></span></div>
          </div>
          <div class="hex-bar"><b></b></div>
        </div>
      </div>
      <div class="statusbar"><i class="st-red"></i><i class="st-blue"></i></div>
    </div>
  </section>
</main>

<div class="mark mark-proto"></div>
<div class="mark mark-path"></div>
<div class="mark mark-file"></div>
</body>
</html>
```

FILE: styles.css
```css
* { box-sizing: border-box; }
html, body { margin: 0; padding: 0; }
body {
  position: relative;
  width: 1918px;
  height: 973px;
  overflow: hidden;
  display: flex;
  flex-direction: column;
  font-family: "Noto Sans", "Noto Sans CJK SC", sans-serif;
  color: #222;
  background: #e4e5e7;
}
.sprite { position: absolute; width: 0; height: 0; }
svg { display: block; flex: none; }
i, em { font-style: normal; }

.ml2 { margin-left: 2px; } .ml3 { margin-left: 3px; } .ml4 { margin-left: 4px; }
.ml5 { margin-left: 5px; } .ml6 { margin-left: 6px; } .ml7 { margin-left: 7px; }
.ml8 { margin-left: 8px; } .ml9 { margin-left: 9px; } .ml11 { margin-left: 11px; }
.ml13 { margin-left: 13px; }

/* title bar */
.titlebar {
  height: 30px;
  flex: none;
  display: flex;
  align-items: center;
  padding-left: 2px;
  background: linear-gradient(90deg, #edf3f6, #ebf2fa 75%, #e5f4f3);
  border-bottom: 1px solid #dfe3e5;
}
.title-text { margin-left: 5px; font-size: 14.300px; color: #222; white-space: nowrap; }
.win-btns { margin-left: auto; display: flex; align-items: center; }
.win-btns svg:nth-child(1) { margin-right: 45px; }
.win-btns svg:nth-child(2) { margin-right: 46px; }
.win-x { color: #222; margin-right: 24px; width: 14px; height: 14px; }

/* menu bar */
.menubar {
  height: 45px;
  flex: none;
  display: flex;
  align-items: center;
  padding-left: 14px;
  background: #fff;
  border-bottom: 2px solid #70727a;
}
.menus { display: flex; gap: 19.500px; font-size: 15px; width: 422px; white-space: nowrap; }
.sep { width: 1px; height: 28px; background: #cfcfcf; flex: none; }
.vbtn { height: 36px; display: flex; align-items: center; justify-content: center; flex: none; border-radius: 5px; }
.w30 { width: 30px; } .w31 { width: 31px; } .w36 { width: 36px; } .w37 { width: 37px; }
.vbtn.active { background: #e9ebee; border: 1px solid #e2e4e7; }
.drop { width: 14px; display: flex; justify-content: center; flex: none; }
.drop::before { content: ""; border: 5px solid transparent; border-top: 6px solid #8a8a8a; border-bottom: 0; }

.main { flex: 1; min-height: 0; display: flex; }

/* library */
.library { width: 200px; flex: none; padding: 0 4px; background: #e4e5e7; display: flex; flex-direction: column; }
.lib-head { height: 31px; display: flex; align-items: center; justify-content: space-between; font-size: 15px; padding: 0 9px 3px 1px; }
.lib-x { color: #111; }
.lib-search { height: 24px; background: #fff; border: 1px solid #bdbdbd; display: flex; align-items: center; padding-left: 12px; font-size: 15px; flex: none; }
.ph { margin-left: 10px; color: #8d8d8d; white-space: nowrap; padding-bottom: 2px; }
.lib-drop { margin-left: auto; margin-right: 6px; border: 5.500px solid transparent; border-top: 6px solid #111; border-bottom: 0; }
.tree { margin-top: 10px; flex: 1; background: #fff; border: 1px solid #bdbdbd; border-bottom: 0; padding-top: 1px; font-size: 15.500px; overflow: hidden; }
.tree-root { height: 22px; display: flex; align-items: center; padding-left: 9px; }
.tree-root span { margin-left: 6px; font-size: 15px; padding-bottom: 2px; }
.minus { width: 11px; height: 11px; border: 1px solid #999; background: linear-gradient(#2a5a90, #2a5a90) center / 5px 1px no-repeat #f4f4f4; margin-right: 8px; }
.tree-row { height: 22px; display: flex; align-items: center; padding-left: 51px; }
.tree-label { display: block; margin-left: 2px; padding-left: 2px; width: 116px; height: 21px; line-height: 21px; white-space: nowrap; overflow: hidden; }
.tree-label.selected { background: #0078d7; color: #fff; }
.tree-label.focused { outline: 1px dotted #222; outline-offset: -1px; }

/* vm area */
.vm { flex: 1; min-width: 0; display: flex; flex-direction: column; border-left: 1px solid #777; }
.tabs { height: 41px; flex: none; display: flex; align-items: flex-end; gap: 6px; padding-left: 5px; background: #e4e5e7; }
.tab {
  height: 34px; flex: none; display: flex; align-items: center;
  padding: 0 8px; gap: 2px; font-size: 12.500px; white-space: nowrap;
  border: 1px solid #c9cacc; border-bottom: 0; border-radius: 6px 6px 0 0; color: #333;
}
.tab.active { background: #fff; font-weight: 700; color: #111; font-size: 13.400px; }
.tab-x { margin-left: auto; color: #a8a8a8; margin-right: 2px; }
.t-home { width: 94px; } .t-home span { font-size: 14.500px; margin-left: -1px; }
.t-kali { width: 249px; } .t-meta { width: 212px; font-size: 12px; } .t-cent { width: 244px; font-size: 13.800px; } .t-winx { width: 160px; }
.t-winx span { margin-left: 2px; }

/* kali panel */
.panel { height: 36px; flex: none; display: flex; align-items: stretch; background: #22242c; border-bottom: 1px solid #111; color: #e2e2e2; }
.kali-logo { width: 26px; margin: 5px 0 6px 4px; background: #1b6fee; border-radius: 3px; box-shadow: 0 0 4px #2a80ff; display: flex; align-items: center; justify-content: center; flex: none; }
.psep { width: 2px; margin-top: 5px; margin-bottom: 5px; background: #666; flex: none; }
.psep.thin { width: 1px; background: #888; margin-top: 4px; margin-bottom: 4px; }
.cell { display: flex; align-items: center; justify-content: center; flex: none; }
.c20 { width: 20px; } .c26 { width: 26px; } .c32 { width: 32px; } .c34 { width: 34px; } .c35 { width: 35px; }
.ws { width: 32px; font-size: 15px; display: flex; align-items: center; justify-content: center; flex: none; border-bottom: 2px solid transparent; }
.ws.on, .cell.on { background: #191b20; border-bottom: 2px solid #1f6fd8; }
.dim { opacity: .55; }
.graph { margin-left: auto; align-self: flex-end; margin-bottom: 1px; }
.clock { width: 40px; font-size: 14px; display: flex; align-items: center; justify-content: center; flex: none; }

/* wireshark */
.window { flex: 1; min-height: 0; margin-left: 1px; background: #22242c; display: flex; flex-direction: column; color: #eee; border-radius: 6px 0 0 0; }
.ws-title { height: 30px; flex: none; display: flex; align-items: center; padding-left: 10px; position: relative; }
.ws-name { position: absolute; left: 0; right: 42px; text-align: center; font-size: 11.500px; font-weight: 700; }
.ws-btns { margin-left: auto; display: flex; gap: 6px; padding-right: 6px; position: relative; }
.ws-btns i { width: 18px; height: 18px; border-radius: 50%; background: #2f323d; border: 1px solid #15161a; display: flex; align-items: center; justify-content: center; }
.ws-btns .close { background: #2a75ea; color: #111; font-size: 12px; font-weight: 700; line-height: 1; }
.ws-menu { height: 24px; flex: none; display: flex; gap: 15.300px; align-items: center; padding: 0 0 3px 13px; font-size: 14.500px; border-bottom: 1px solid #555761; }
.ws-tools { height: 39px; flex: none; display: flex; align-items: center; padding-left: 7px; border-bottom: 2px solid #45474f; }
.tool { width: 33px; height: 32px; display: flex; align-items: center; justify-content: center; flex: none; }
.tool.frame { width: 30px; margin-right: 3px; background: #2a2d35; border: 1px solid #3c3f48; border-radius: 3px; }

.filter-row { height: 21px; margin-top: 3px; flex: none; display: flex; align-items: center; padding-left: 9px; }
.filter { width: 1665px; height: 21px; display: flex; align-items: stretch; border: 1px solid #d0d2d6; border-radius: 3px; }
.bookmark { width: 17px; display: flex; align-items: center; justify-content: center; border-right: 1px solid #eee; flex: none; }
.filter-text { width: 1585px; background: #006400; color: #f2f2f2; font-size: 14px; line-height: 19px; padding-left: 6px; border-right: 1px solid #eee; white-space: nowrap; flex: none; }
.f-clear { width: 14px; margin: 2px 0 2px 2px; background: #8c8c8c; color: #26282f; border-radius: 2px; display: flex; align-items: center; justify-content: center; flex: none; }
.f-apply { width: 24px; margin: 2px 0 2px 3px; background: #9a9ca8; border-radius: 3px; display: flex; align-items: center; justify-content: center; flex: none; }
.f-drop { margin: 8px 0 0 8px; width: 0; height: 0; border: 3.500px solid transparent; border-top: 4px solid #ddd; border-bottom: 0; flex: none; }
.f-plus { margin-left: 6px; }

.list-wrap { margin-top: 6px; flex: none; display: flex; padding-left: 5px; height: 515px; }
.list { width: 1660px; flex: none; display: flex; flex-direction: column; font-family: "Liberation Mono", monospace; font-size: 15px; }
.pkt-head { height: 22px; flex: none; display: flex; align-items: center; background: #2a2d35; border-bottom: 1px solid #14151a; color: #eee; font-family: "Noto Sans", sans-serif; font-size: 14px; }
.pkt-head span { height: 21px; line-height: 21px; border-right: 1px solid #3d4049; }
.pkt-head .no { text-align: left; padding: 0 0 0 3px; width: 79px; }
.pkt-head .time { width: 126px; padding-left: 3px; }
.pkt-head .src { width: 189px; padding-left: 3px; }
.pkt-head .dst { width: 189px; padding-left: 4px; }
.pkt-head .pro { width: 72px; padding-left: 4px; }
.pkt-head .len { width: 54px; text-align: left; padding: 0 0 0 4px; }
.pkts { position: relative; }
.bracket { position: absolute; left: 9px; top: 230px; width: 9px; height: 263px; border-left: 1px solid #222; border-top: 1px solid #222; }
.pkt { height: 17px; line-height: 17px; display: flex; color: #12272e; white-space: pre; }
.pkt.y { background: #feffd0; }
.pkt.l { background: #e4e4fc; }
.pkt.g { background: #a0a0a0; }
.pkt.s { background: #2a75ff; color: #f4f6ff; }
.no { width: 80px; text-align: right; padding-right: 3px; flex: none; }
.time { width: 126px; padding-left: 3px; flex: none; }
.src { width: 189px; padding-left: 3px; flex: none; }
.dst { width: 189px; padding-left: 3px; flex: none; }
.pro { width: 71px; padding-left: 3px; flex: none; }
.len { width: 55px; text-align: right; padding-right: 3px; flex: none; }
.info { padding-left: 3px; flex: 1; }
.minimap {
  width: 8px; margin-left: 1px; flex: none;
  background:
    linear-gradient(#c33, #c33) 0 57px / 100% 2px no-repeat,
    linear-gradient(#111, #111) 0 495px / 100% 1px no-repeat,
    linear-gradient(#fff, #fff) 0 495px / 100% 20px no-repeat,
    repeating-linear-gradient(#feffd0 0 4px, #e4e4fc 4px 6px) 0 0 / 100% 57px no-repeat,
    #feffd0;
}

.panes { margin-top: 5px; height: 170px; flex: none; display: flex; padding-left: 5px; font-family: "Liberation Mono", monospace; font-size: 15px; }
.details { width: 873px; flex: none; background: #2a2d37; display: flex; flex-direction: column; }
.d-body { flex: 1; min-height: 0; display: flex; }
.d-rows { flex: 1; overflow: hidden; }
.drow { height: 17px; line-height: 17px; padding-left: 48px; white-space: pre; color: #e9e9e9; display: flex; }
.drow.sel { background: #2a75ff; color: #fff; }
.tw { width: 15px; flex: none; position: relative; }
.tw.on::before { content: ""; position: absolute; left: 2px; top: 5px; border: 3.500px solid transparent; border-left: 4px solid #aaa; border-right: 0; }
.vbar { width: 8px; flex: none; border-left: 1px solid #22242c; }
.vbar b { display: block; width: 5px; height: 19px; margin: 142px 0 0 1px; background: #666972; border-radius: 3px; }
.hbar { height: 17px; flex: none; padding-top: 9px; background: #2a2d37; }
.hbar b { display: block; width: 798px; height: 6px; background: #5a5d66; border-radius: 3px; }
.hex { width: 815px; margin-left: 5px; flex: none; background: #2a2d37; display: flex; }
.hex-rows { flex: 1; }
.hrow { height: 17px; line-height: 17px; white-space: pre; display: flex; color: #f0f0f0; }
.off { width: 64px; padding-left: 11px; color: #696c78; background: #2e313b; flex: none; }
.bytes { width: 432px; height: 17px; background: #23252d; flex: none; }
.asc { width: 153px; height: 17px; margin-left: 28px; background: #23252d; flex: none; }
.b-end, .a-end { background: transparent; }
.dim-t { color: #777a84; }
.hrow mark { background: #2a75ff; color: #fff; display: inline-block; height: 17px; }
.hrow em { display: inline-block; height: 17px; outline: 1px solid #c7cbd4; outline-offset: -1px; }
.hex-bar { width: 13px; flex: none; padding: 41px 4px 0 3px; }
.hex-bar b { display: block; width: 6px; height: 119px; background: #4e515b; border-radius: 3px; }
.statusbar { flex: 1; display: flex; padding-left: 14px; gap: 11px; overflow: hidden; }
.st-red { width: 12px; height: 12px; margin-top: 5px; border-radius: 50%; background: #d63a3a; }
.st-blue { width: 12px; height: 12px; margin-top: 5px; background: #4a90d9; }

/* red hand-drawn annotations over the capture */
.mark { position: absolute; border: 4px solid #e81c20; border-left-width: 5px; border-right-width: 5px; pointer-events: none; }
.mark-proto { left: 773px; top: 543px; width: 91px; height: 148px; }
.mark-path { left: 1245px; top: 606px; width: 331px; height: 46px; }
.mark-file { left: 239px; top: 923px; width: 439px; height: 35px; }
```
